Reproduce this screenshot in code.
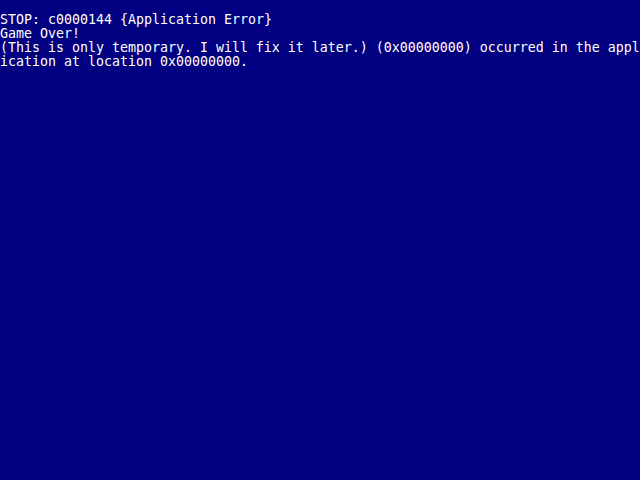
import React from 'react';

const App: React.FC = () => {
  return (
    <div className="w-[640px] h-[480px] bg-[#000080] text-white overflow-hidden">
      <div
        className="pt-[13px] text-[13.29px] leading-[14px] break-all whitespace-pre-wrap"
        style={{ fontFamily: '"DejaVu Sans Mono", "Liberation Mono", monospace' }}
      >
        <div>STOP: c0000144 {'{'}Application Error{'}'}</div>
        <div>Game Over!</div>
        <div>(This is only temporary. I will fix it later.) (0x00000000) occurred in the application at location 0x00000000.</div>
      </div>
    </div>
  );
};

export default App;
